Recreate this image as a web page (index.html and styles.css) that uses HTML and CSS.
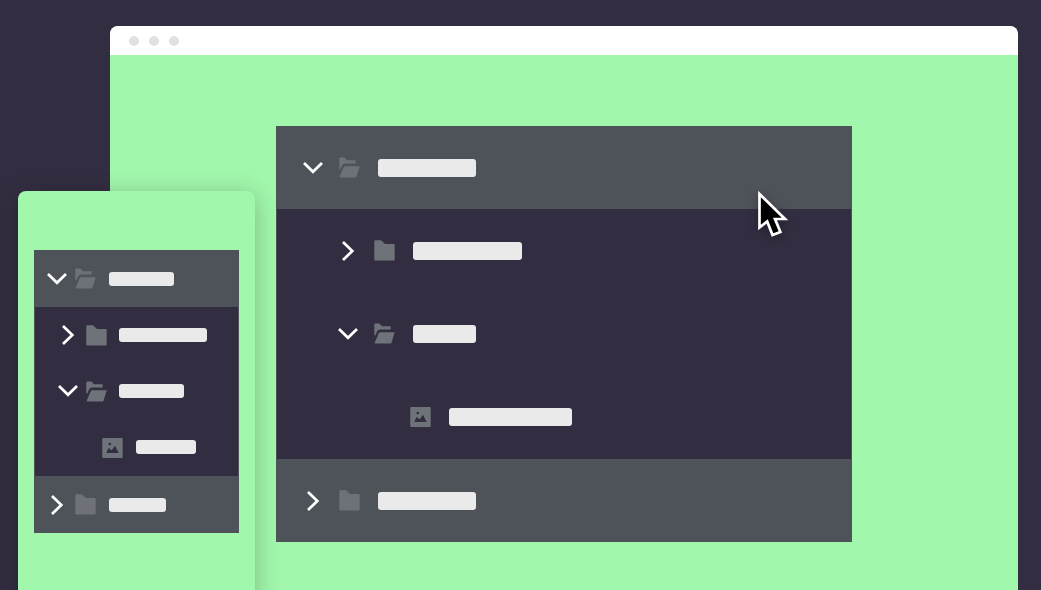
FILE: index.html
```
<!DOCTYPE html>
<html lang="en">
<head>
<meta charset="utf-8">
<link rel="stylesheet" href="styles.css">
</head>
<body>
<svg class="sprite" aria-hidden="true">
  <symbol id="down" viewBox="0 0 20 20"><path d="M1 5 10 13.8 19 5" fill="none" stroke="#fff" stroke-width="2.7"/></symbol>
  <symbol id="right" viewBox="0 0 20 20"><path d="M5 1 14.3 10 5 19" fill="none" stroke="#fff" stroke-width="2.7"/></symbol>
  <symbol id="open" viewBox="0 0 21 21"><path d="M.3 11V1.4Q.3.5 1.4.5H5.3L8 3.2H16.7V6.4H6Q4 6.4 3.3 8L1.4 12.5Q.3 12.5.3 11ZM6.3 9.2H20.7L17.5 19.7Q17.2 20.6 16.4 20.6H1.3Q.4 20.6.8 19.6L4.6 10.4Q5.1 9.2 6.3 9.2Z"/></symbol>
  <symbol id="folder" viewBox="0 0 21 21"><path d="M.3 1.2Q.3.3 1.2.3H7L11 4H19.8Q20.7 4 20.7 4.9V19.7Q20.7 20.6 19.8 20.6H1.2Q.3 20.6.3 19.7Z"/></symbol>
  <symbol id="image" viewBox="0 0 21 21"><path fill-rule="evenodd" d="M1.2 1H19.8Q20.7 1 20.7 1.9V20.1Q20.7 21 19.8 21H1.2Q.3 21 .3 20.1V1.9Q.3 1 1.2 1ZM4.2 16H16.7L13 8.8 9.7 13.2 6.5 11ZM7.8 5.8A1.3 1.3 0 1 0 7.8 8.4 1.3 1.3 0 1 0 7.8 5.8Z"/></symbol>
</svg>
<main class="stage">
  <section class="window">
    <header class="titlebar"><span class="dot"></span><span class="dot"></span><span class="dot"></span></header>
    <div class="content">
      <div class="tree">
        <div class="row top"><button class="toggle"><svg><use href="#down"/></svg></button><svg class="icon"><use href="#open"/></svg><span class="bar medium"></span></div>
        <div class="group">
          <div class="row child"><button class="toggle"><svg><use href="#right"/></svg></button><svg class="icon"><use href="#folder"/></svg><span class="bar long"></span></div>
          <div class="row child"><button class="toggle"><svg><use href="#down"/></svg></button><svg class="icon"><use href="#open"/></svg><span class="bar short"></span></div>
          <div class="row leaf"><svg class="icon"><use href="#image"/></svg><span class="bar file"></span></div>
        </div>
        <div class="row top"><button class="toggle"><svg><use href="#right"/></svg></button><svg class="icon"><use href="#folder"/></svg><span class="bar medium"></span></div>
        <svg class="cursor" viewBox="0 0 34 50"><path d="M2.5 4V37.5L10.2 31.4 15.5 45 23.4 42 18 29H28Z" fill="#000" stroke="#fff" stroke-width="2.7"/></svg>
      </div>
    </div>
  </section>
  <section class="phone">
    <div class="tree compact">
      <div class="row top"><button class="toggle"><svg><use href="#down"/></svg></button><svg class="icon"><use href="#open"/></svg><span class="bar medium"></span></div>
      <div class="group">
        <div class="row child"><button class="toggle"><svg><use href="#right"/></svg></button><svg class="icon"><use href="#folder"/></svg><span class="bar long"></span></div>
        <div class="row child"><button class="toggle"><svg><use href="#down"/></svg></button><svg class="icon"><use href="#open"/></svg><span class="bar short"></span></div>
        <div class="row leaf"><svg class="icon"><use href="#image"/></svg><span class="bar file"></span></div>
      </div>
      <div class="row top"><button class="toggle"><svg><use href="#right"/></svg></button><svg class="icon"><use href="#folder"/></svg><span class="bar last"></span></div>
    </div>
  </section>
</main>
</body>
</html>
```
FILE: styles.css
```
* { box-sizing: border-box; }
body { margin: 0; background: #332d41; font-family: "Liberation Sans", sans-serif; }
.sprite { position: absolute; width: 0; height: 0; }
.stage {
  position: relative;
  display: flex;
  min-height: 100vh;
  padding: 26px 23px 0 110px;
  overflow: hidden;
}
.window {
  flex: 1;
  display: flex;
  flex-direction: column;
  border-radius: 8px 8px 0 0;
  background: #a1f7ac;
  overflow: hidden;
}
.titlebar {
  display: flex;
  align-items: center;
  gap: 10px;
  height: 29px;
  padding-left: 19px;
  background: #fff;
}
.dot { width: 10px; height: 10px; border-radius: 50%; background: #e1e1e1; }
.content { padding: 71px 166px 48px; }
.tree {
  --row: 83px;
  --start: 26px;
  --indent: 35px;
  --leaf: 107px;
  --toggle-gap: 16px;
  --icon-gap: 18px;
  --bar: 18px;
  position: relative;
  border: solid #4e5259;
  border-width: 0 1px;
  background: #4e5259;
}
.group { padding-bottom: 1px; background: #332d41; }
.row {
  display: flex;
  align-items: center;
  height: var(--row);
  padding-left: var(--start);
}
.child { padding-left: calc(var(--start) + var(--indent)); }
.leaf { padding-left: calc(var(--start) + var(--leaf)); }
.toggle {
  width: 20px;
  height: 20px;
  margin-right: var(--toggle-gap);
  padding: 0;
  border: 0;
  background: none;
}
.toggle svg { display: block; width: 20px; height: 20px; }
.icon { width: 21px; height: 21px; margin-right: var(--icon-gap); fill: #6e7178; }
.group .icon { fill: #6e737a; }
.bar { height: var(--bar); border-radius: 3px; background: #eaeaeb; }
.medium { width: 98px; }
.long { width: 109px; }
.short { width: 63px; }
.file { width: 123px; }
.cursor {
  position: absolute;
  top: 64px;
  right: 60px;
  width: 34px;
  height: 50px;
  overflow: visible;
  filter: drop-shadow(0 3px 5px rgba(0, 0, 0, .3));
}
.phone {
  position: absolute;
  top: 191px;
  bottom: -24px;
  left: 18px;
  width: 237px;
  padding: 59px 16px 0;
  border-radius: 8px;
  background: #a1f7ac;
  box-shadow: 0 4px 24px rgba(0, 0, 0, .24);
}
.compact {
  --row: 56px;
  --start: 12px;
  --indent: 11px;
  --leaf: 55px;
  --toggle-gap: 8px;
  --icon-gap: 13px;
  --bar: 14px;
}
.compact .top { height: 57px; }
.compact .child { --icon-gap: 12px; }
.compact .medium, .compact .short { width: 65px; }
.compact .long { width: 88px; }
.compact .file { width: 60px; }
.compact .last { width: 57px; }
```
